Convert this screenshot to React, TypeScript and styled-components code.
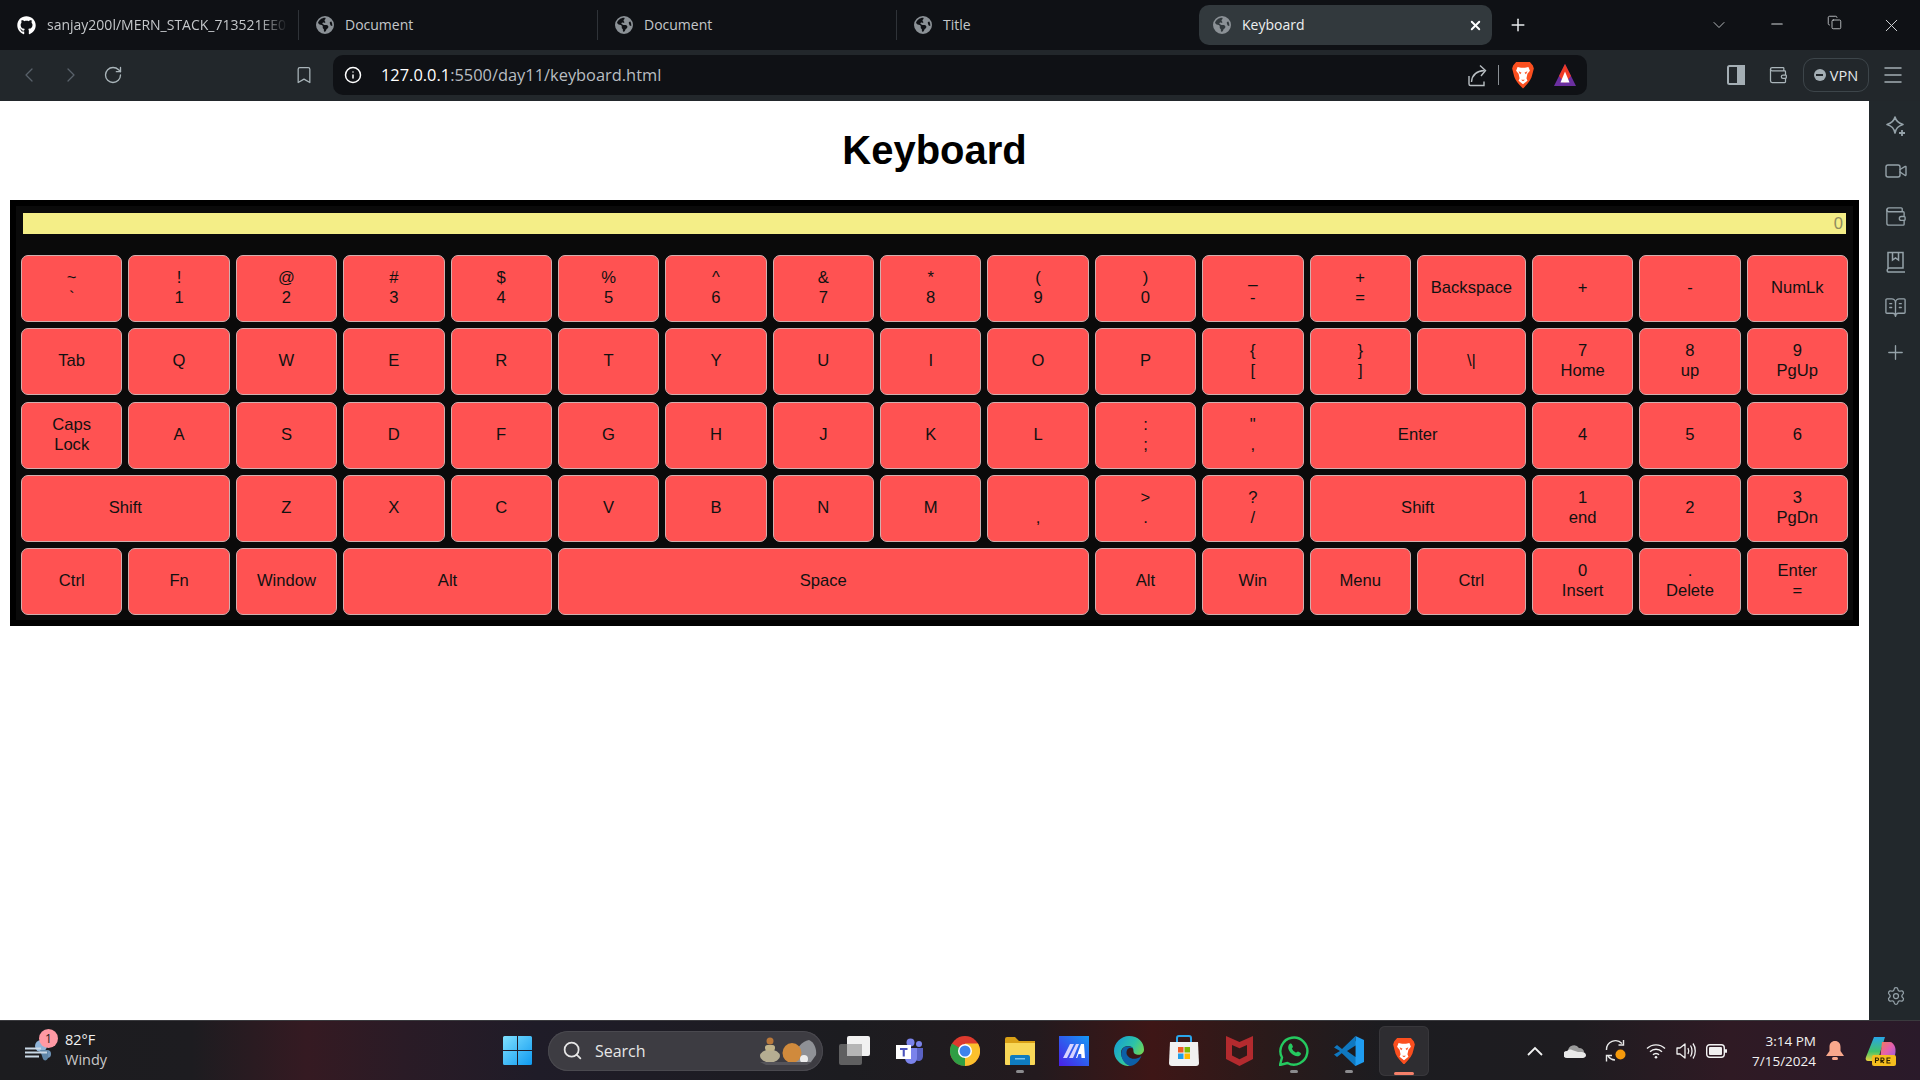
import React from 'react';
import styled, { createGlobalStyle } from 'styled-components';
import { FaGithub } from 'react-icons/fa';
import { FaEarthAmericas } from 'react-icons/fa6';
import {
  BookOpenText,
  Bookmark,
  ChevronDown,
  ChevronLeft,
  ChevronRight,
  Copy,
  Info,
  Menu,
  Minus,
  Plus,
  RotateCw,
  Search,
  Settings,
  Video,
  Wallet,
  X,
} from 'lucide-react';

const GlobalStyle = createGlobalStyle`
  html, body {
    margin: 0;
    padding: 0;
    background: #fff;
  }
  * {
    box-sizing: border-box;
  }
`;

const Screen = styled.div`
  width: 1920px;
  height: 1080px;
  display: flex;
  flex-direction: column;
  overflow: hidden;
`;

/* browser chrome */
const TabStrip = styled.div`
  height: 50px;
  background: #0f1115;
  display: flex;
  align-items: center;
  padding-left: 3px;
  gap: 6px;
  color: #c9ccd0;
  font-family: 'Open Sans', sans-serif;
`;

const Tab = styled.div<{ $active?: boolean; $divider?: boolean }>`
  position: relative;
  width: 293px;
  height: 40px;
  flex: none;
  display: flex;
  align-items: center;
  padding: 0 8px 0 14px;
  gap: 11px;
  border-radius: 10px;
  background: ${(p) => (p.$active ? '#32393d' : 'transparent')};
  &::after {
    content: '';
    display: ${(p) => (p.$divider ? 'block' : 'none')};
    position: absolute;
    right: -3px;
    top: 5px;
    bottom: 5px;
    width: 1px;
    background: #2f3338;
  }
`;

const TabTitle = styled.span<{ $active?: boolean; $fade?: boolean }>`
  flex: 1;
  font-size: 14px;
  padding-bottom: 2px;
  white-space: nowrap;
  color: ${(p) => (p.$active ? '#eef0f1' : '#c4c7ca')};
  ${(p) => (p.$fade ? 'mask-image: linear-gradient(to right, #000 88%, transparent 100%);' : '')}
`;

const TabClose = styled.span`
  display: flex;
  color: #fff;
  margin-right: 1px;
`;

const NewTab = styled.div`
  width: 32px;
  margin-left: 4px;
  display: flex;
  justify-content: center;
  color: #e8eaec;
`;

const WindowControls = styled.div`
  margin-left: auto;
  display: flex;
  color: #d4d7da;
`;

const WindowButton = styled.div`
  width: 57.3px;
  display: flex;
  justify-content: center;
`;

const Toolbar = styled.div`
  height: 51px;
  background: #22272b;
  display: flex;
  align-items: center;
  padding: 0 0 1px 8px;
`;

const NavButton = styled.div<{ $dim?: boolean; $offset?: number }>`
  width: 42px;
  flex: none;
  display: flex;
  justify-content: center;
  margin-left: ${(p) => p.$offset ?? 0}px;
  color: ${(p) => (p.$dim ? '#59616a' : '#aab5ba')};
`;

const AddressBar = styled.div`
  width: 1254px;
  height: 40px;
  margin-left: 8px;
  flex: none;
  border-radius: 10px;
  background: #0f1115;
  display: flex;
  align-items: center;
  padding: 0 10px;
  font-family: 'Open Sans', sans-serif;
`;

const InfoSlot = styled.div`
  width: 20px;
  display: flex;
  justify-content: center;
  color: #fff;
`;

const Url = styled.div`
  margin-left: 18px;
  padding-bottom: 1px;
  font-size: 16.4px;
  color: #b9bdc1;
  b {
    font-weight: 400;
    color: #fff;
  }
`;

const AddressActions = styled.div`
  margin-left: auto;
  display: flex;
  align-items: center;
  gap: 18px;
`;

const ShareGroup = styled.div`
  display: flex;
  align-items: center;
  margin-right: -6px;
`;

const ActionDivider = styled.div`
  width: 1px;
  height: 20px;
  margin-left: 10px;
  background: #8a8f94;
`;

const VpnPill = styled.div`
  width: 66px;
  height: 34px;
  margin-left: 4px;
  flex: none;
  border: 1px solid #3d454a;
  border-radius: 11px;
  display: flex;
  align-items: center;
  justify-content: center;
  gap: 4px;
  color: #e4e7e9;
  font-family: 'Open Sans', sans-serif;
  font-size: 14.5px;
`;

const VpnDot = styled.span`
  width: 12px;
  height: 12px;
  border-radius: 50%;
  background: #a4aeb4;
  display: flex;
  align-items: center;
  justify-content: center;
  &::after {
    content: '';
    width: 7px;
    height: 2px;
    background: #22272b;
  }
`;

const MenuSlot = styled.div`
  width: 48px;
  flex: none;
  display: flex;
  justify-content: center;
  color: #a4aeb4;
`;

const Body = styled.div`
  flex: 1;
  display: flex;
  min-height: 0;
`;

const Page = styled.main`
  flex: 1;
  background: #fff;
  min-width: 0;
`;

const SideBar = styled.aside`
  width: 51px;
  flex: none;
  background: #22282c;
  display: flex;
  flex-direction: column;
  align-items: center;
  padding: 14px 0 14px 2px;
  gap: 22px;
  color: #95a2a9;
`;

const SideSettings = styled.div`
  margin-top: auto;
  display: flex;
`;

/* the keyboard page */
const Title = styled.h1`
  margin: 26px 0 27px;
  font-family: 'Liberation Sans', Arial, sans-serif;
  font-size: 40px;
  line-height: 46px;
  font-weight: 700;
  text-align: center;
  color: #000;
`;

const KeyboardFrame = styled.div`
  margin: 0 10px;
  border: 6px solid #000;
  background: #0a0a0a;
  padding: 7px 5px 5px;
`;

const Display = styled.div`
  height: 21px;
  margin: 0 2px 21px;
  background: #f4ee87;
  color: #8f8d5e;
  font-family: 'Liberation Sans', Arial, sans-serif;
  font-size: 16.6px;
  line-height: 21px;
  text-align: right;
  padding-right: 3px;
`;

const Keys = styled.div`
  display: grid;
  grid-template-columns: repeat(13, 1fr) 109px repeat(3, 1fr);
  grid-auto-rows: 67px;
  column-gap: 6px;
  row-gap: 6.25px;
`;

const Key = styled.button<{ $span?: number }>`
  grid-column: span ${(p) => p.$span ?? 1};
  border: 1.5px solid #d2aeae;
  border-radius: 7px;
  background: #ff5252;
  color: #111;
  padding: 0 0 1px;
  font-family: 'Liberation Sans', Arial, sans-serif;
  font-size: 16.6px;
  line-height: 20px;
  white-space: pre-line;
  text-align: center;
`;

/* taskbar */
const Taskbar = styled.footer`
  height: 60px;
  flex: none;
  display: flex;
  align-items: center;
  padding-right: 12px;
  border-top: 1px solid #3a3a3e;
  color: #f0f0f0;
  font-family: 'Open Sans', sans-serif;
  background: linear-gradient(
    to right,
    #1c1c1f 0%,
    #1d1c20 10%,
    #351a22 16%,
    #2a1b26 21%,
    #1f1c28 28%,
    #1c1c20 44%,
    #231a1e 54%,
    #3e1616 60%,
    #2a1a1a 66%,
    #1c1c20 72%,
    #1e1c20 82%,
    #2f1a24 90%,
    #2a1a2a 100%
  );
`;

const Weather = styled.div`
  width: 490px;
  flex: none;
  display: flex;
  align-items: center;
  padding-left: 25px;
  gap: 12px;
`;

const WeatherIcon = styled.div`
  position: relative;
  width: 28px;
  height: 30px;
`;

const Badge = styled.span`
  position: absolute;
  left: 14px;
  top: -7px;
  width: 19px;
  height: 19px;
  border-radius: 50%;
  background: #ff99a4;
  color: #1a1a1a;
  font-size: 12px;
  line-height: 19px;
  text-align: center;
`;

const WeatherText = styled.div`
  font-size: 14.5px;
  line-height: 20px;
  margin-top: -1px;
  span {
    display: block;
    color: #c9c9c9;
  }
`;

const Slot = styled.div<{ $width?: number; $active?: boolean; $dot?: boolean }>`
  position: relative;
  width: ${(p) => (p.$active ? 50 : p.$width ?? 54.9)}px;
  margin-left: ${(p) => (p.$active ? 2.5 : 0)}px;
  height: 50px;
  flex: none;
  display: flex;
  align-items: center;
  justify-content: center;
  border-radius: 6px;
  ${(p) => (p.$active ? 'background: #2e2d31; box-shadow: inset 0 0 0 1px #38373b;' : '')}
  &::after {
    content: '';
    display: ${(p) => (p.$dot || p.$active ? 'block' : 'none')};
    position: absolute;
    bottom: ${(p) => (p.$active ? 1 : 3)}px;
    left: 50%;
    transform: translateX(-50%);
    width: ${(p) => (p.$active ? 20 : 8)}px;
    height: 3px;
    border-radius: 2px;
    background: ${(p) => (p.$active ? '#f5806a' : '#8b8b8e')};
  }
`;

const SearchPill = styled.div`
  width: 275px;
  height: 40px;
  margin: 0 4.5px 0 3px;
  flex: none;
  border-radius: 20px;
  background: #3d3c42;
  box-shadow: inset 0 0 0 1px #4a494f;
  display: flex;
  align-items: center;
  padding: 0 5px 0 14px;
  color: #e6e6e6;
  font-size: 16px;
  gap: 12px;
`;

const Pebbles = styled.div`
  margin-left: auto;
  display: flex;
`;

const Tray = styled.div`
  margin-left: auto;
  display: flex;
  align-items: center;
`;

const Clock = styled.div`
  width: 80px;
  flex: none;
  text-align: right;
  font-size: 13.5px;
  line-height: 20px;
  white-space: nowrap;
  color: #f2f2f2;
`;

/* drawn icons */
const ShareIcon = () => (
  <svg width="20" height="24" viewBox="0 0 20 24" fill="none" stroke="#b8bec2" strokeWidth="1.400">
    <path d="M1 13v8a1.500 1.500 0 0 0 1.500 1.500H16v-4" />
    <path d="M3.500 19c.5-7 4.500-11 13-11.500" />
    <path d="M12 2.500l5.500 5-4.500 5.500" />
  </svg>
);

const LionIcon = ({ size = 24 }: { size?: number }) => (
  <svg width={size} height={size * 1.15} viewBox="0 0 24 28">
    <path
      d="M5 1h14l3 3.500 1 3-1.500 6c-.8 5-4 9-9.500 14.500C6.500 22.500 3.300 18.500 2.500 13.500L1 7.500l1-3z"
      fill="#fb4f1f"
    />
    <path
      d="M6.500 6l3.500.8h4L17.500 6l1.500 4-2.500 3-1 4.500 1 2.500-4.500 3.500L7.500 20l1-2.500-1-4.500L5 10z"
      fill="#fff"
    />
    <path d="M7.500 10.500l3 1.500-1.500 1.500zM16.500 10.500l-3 1.500 1.500 1.500zM10 19h4l-2 1.600z" fill="#fb4f1f" />
  </svg>
);

const RewardsIcon = () => (
  <svg width="24" height="24" viewBox="0 0 24 24">
    <path d="M12 1L23 23H1z" fill="#6b2fa0" />
    <path d="M12 1L18 13 12 20 6 13z" fill="#f03a24" />
    <path d="M12 8.500L16.500 19.500H7.500z" fill="#fff" />
  </svg>
);

const PanelIcon = () => (
  <svg width="20" height="22" viewBox="0 0 20 22" fill="none" stroke="#a4aeb4" strokeWidth="2">
    <rect x="2" y="2" width="16" height="18" rx="1.500" />
    <rect x="12" y="2" width="6" height="18" fill="#a4aeb4" />
  </svg>
);

const SparkleIcon = () => (
  <svg width="22" height="22" viewBox="0 0 22 22" fill="none" stroke="currentColor" strokeWidth="1.600">
    <path d="M10 2c1 4 3 6 8 7.500-5 1.500-7 3.500-8 8.500-1-5-3-7-8-8.500C7 8 9 6 10 2z" strokeLinejoin="round" />
    <path d="M17 15v6M14 18h6" strokeWidth="1.800" />
  </svg>
);

const BookMarkIcon = () => (
  <svg width="22" height="24" viewBox="0 0 22 24" fill="none" stroke="currentColor" strokeWidth="1.500">
    <path d="M3 19V2.500h15V18H4.500A2.300 2.300 0 0 0 3 22h17" />
    <path d="M7.500 3v7l3-2 3 2V3" />
  </svg>
);

const WindowsLogo = () => (
  <svg width="29" height="29" viewBox="0 0 29 29">
    <defs>
      <linearGradient id="win" x1="0" y1="0" x2="1" y2="1">
        <stop offset="0" stopColor="#7fe0ff" />
        <stop offset="1" stopColor="#0f9af0" />
      </linearGradient>
    </defs>
    <path d="M0 1.500A1.500 1.500 0 0 1 1.500 0H14v14H0zM15 0h12.500A1.500 1.500 0 0 1 29 1.500V14H15zM0 15h14v14H1.500A1.500 1.500 0 0 1 0 27.500zM15 15h14v12.500a1.500 1.500 0 0 1-1.500 1.500H15z" fill="url(#win)" />
  </svg>
);

const WindIcon = () => (
  <svg width="28" height="30" viewBox="0 0 28 30">
    <circle cx="16" cy="10" r="6" fill="#8fb4d8" />
    <circle cx="22" cy="18" r="4" fill="#6e94b8" />
    <path d="M15 14h8v8c-1 3-4 3-5 1z" fill="#5f86a8" />
    <path d="M0 12.500h16M0 16.500h22M0 20.500h14" stroke="#c9d8e6" strokeWidth="2" />
  </svg>
);

const PebblesIcon = () => (
  <svg width="60" height="28" viewBox="0 0 60 28">
    <path d="M36 25c1-14 8-21 15-22 5 2 8 9 7 15l-5 7z" fill="#8f9196" />
    <ellipse cx="12" cy="19" rx="10" ry="6.500" fill="#b5ad92" />
    <rect x="7" y="8" width="10" height="5.500" rx="2.500" fill="#c2b48a" />
    <circle cx="12" cy="4" r="3.500" fill="#b9783a" />
    <ellipse cx="34" cy="16" rx="9.500" ry="10" fill="#d08a3c" />
    <circle cx="46" cy="22" r="4" fill="#ececec" />
    <path d="M2 25h52l-5 3H8z" fill="#55545a" />
  </svg>
);

const TaskViewIcon = () => (
  <svg width="32" height="30" viewBox="0 0 32 30">
    <rect x="0" y="8" width="23" height="21" rx="2" fill="#5f5f60" />
    <rect x="8" y="0" width="23" height="20" rx="2" fill="#f1f1f1" />
    <rect x="8" y="8" width="15" height="12" fill="#b5b5b5" />
  </svg>
);

const TeamsIcon = () => (
  <svg width="28" height="26" viewBox="0 0 28 26">
    <circle cx="23" cy="6" r="3" fill="#7b83eb" />
    <circle cx="14.500" cy="4.500" r="4" fill="#7b83eb" />
    <path d="M18 10h9v8c0 3-2 5-4.500 5-1.500 0-3-1-3.500-2z" fill="#5a62c3" />
    <path d="M9 10h12v10c0 3-2.500 6-6 6s-6-3-6-6z" fill="#7b83eb" />
    <rect x="0" y="7" width="15" height="14" fill="#fff" />
    <path d="M4 10h7.500v2H8.800v6.500H6.700V12H4z" fill="#4b53bc" />
  </svg>
);

const ChromeIcon = () => (
  <svg width="30" height="30" viewBox="0 0 30 30">
    <circle cx="15" cy="15" r="15" fill="#dd3a2e" />
    <path d="M15 15L2 7.500A15 15 0 0 0 15 30l7.500-13z" fill="#2f9e44" />
    <path d="M15 15V7.500h13A15 15 0 0 1 15 30z" fill="#fbc02d" />
    <circle cx="15" cy="15" r="7" fill="#fff" />
    <circle cx="15" cy="15" r="5.500" fill="#3f83ea" />
  </svg>
);

const FolderIcon = () => (
  <svg width="30" height="28" viewBox="0 0 30 28">
    <path d="M0 2a2 2 0 0 1 2-2h8l4 4h16v8H0z" fill="#d9a016" />
    <path d="M0 6h30v21a1 1 0 0 1-1 1H1a1 1 0 0 1-1-1z" fill="#f8d758" />
    <path d="M5 20a2 2 0 0 1 2-2h16a2 2 0 0 1 2 2v8H5z" fill="#0f7cc0" />
    <rect x="10" y="21" width="10" height="1.500" fill="#7cc4ee" />
  </svg>
);

const MaIcon = () => (
  <svg width="30" height="30" viewBox="0 0 30 30">
    <defs>
      <linearGradient id="ma" x1="0" y1="1" x2="1" y2="0">
        <stop offset="0" stopColor="#4a1fe6" />
        <stop offset="1" stopColor="#1499f5" />
      </linearGradient>
    </defs>
    <rect width="30" height="30" fill="url(#ma)" />
    <path d="M4 22l7-14h4L8 22zM10 22l7-14h3l-6 14z" fill="#d8d4ff" />
    <path d="M17 22l5-14h3l1 14h-3.500l-.3-4h-2.600l-1.400 4z" fill="#fff" />
  </svg>
);

const EdgeIcon = () => (
  <svg width="30" height="30" viewBox="0 0 30 30">
    <defs>
      <linearGradient id="edge" x1="0" y1="0" x2="1" y2="0.600">
        <stop offset="0" stopColor="#1498d8" />
        <stop offset="0.600" stopColor="#2cc3a8" />
        <stop offset="1" stopColor="#7ad84a" />
      </linearGradient>
    </defs>
    <path d="M15 0c9 0 15 6 15 13.500 0 4-3.500 6-7.500 5-4-1-2.500-4-3.500-6-1-3-8-4-11 .5C5 18 9 27 17 30 8 31 0 24 0 15 0 7 7 0 15 0z" fill="url(#edge)" />
    <path d="M8.500 13C11 9 18 10 19 12.500c-2-1.500-6-1-6.500 3.500-.5 4.500 5 8 10 6.500 2-.5 4-1.500 5-3-2 6-7 10.500-12 10.500C9 27.500 5 19 8.500 13z" fill="#0c5fa8" />
  </svg>
);

const StoreIcon = () => (
  <svg width="30" height="32" viewBox="0 0 30 32">
    <path d="M8 7V3a2 2 0 0 1 2-2h10a2 2 0 0 1 2 2v4" fill="none" stroke="#2aa5ea" strokeWidth="2" />
    <path d="M1 7h28l1 21a3 3 0 0 1-3 3H3a3 3 0 0 1-3-3z" fill="#f1f1f1" />
    <rect x="9" y="12" width="5.500" height="5.500" fill="#f05a24" />
    <rect x="15.500" y="12" width="5.500" height="5.500" fill="#7fba00" />
    <rect x="9" y="18.500" width="5.500" height="5.500" fill="#1f9ee8" />
    <rect x="15.500" y="18.500" width="5.500" height="5.500" fill="#ffb900" />
  </svg>
);

const McAfeeIcon = () => (
  <svg width="27" height="30" viewBox="0 0 27 30">
    <path d="M0 0l13.500 6L27 0v23L13.500 30 0 23zM6 9v10.500l7.500 3.800 7.500-3.800V9l-7.500 3.200z" fill="#b32a2e" fillRule="evenodd" />
  </svg>
);

const WhatsAppIcon = () => (
  <svg width="30" height="30" viewBox="0 0 30 30">
    <path d="M1 29l2-7.500A13.500 13.500 0 1 1 8.500 27z" fill="none" stroke="#25c95f" strokeWidth="2.400" strokeLinejoin="round" />
    <path d="M10.500 8c1-.8 2-.6 2.400.3l1 2.200c.2.600-.6 1.500-1 2 .8 1.800 2.200 3.200 4.200 4.200.6-.5 1.300-1.400 2-1.200l2.300 1.200c.8.500.6 1.500 0 2.300-1.500 1.800-4 1.500-6.500.2-2.800-1.500-4.700-3.800-5.500-6.300-.5-1.800 0-3.700 1.100-4.900z" fill="#25c95f" />
  </svg>
);

const VsCodeIcon = () => (
  <svg width="30" height="30" viewBox="0 0 30 30">
    <path d="M21.500 0L30 4v22l-8.500 4L8 17l13.500-12z" fill="#1f9cf0" />
    <path d="M21.500 0v30L8 17 3 21l-3-2.500L6 15 0 11.500 3 9l5 4z" fill="#0f78c0" />
    <path d="M21.500 9.500L13 15l8.500 6z" fill="#1c1c20" />
  </svg>
);

const CloudIcon = () => (
  <svg width="22" height="16" viewBox="0 0 22 16">
    <path d="M4 8a6 6 0 0 1 11-3c3 0 5 2 5 4H4z" fill="#9b9b9b" />
    <path d="M3 15a3.500 3.500 0 0 1 0-7c1-1 3-2 5-1l6 2h4c3 0 4 2 4 3.500S20 15 19 15z" fill="#e9e9e9" />
  </svg>
);

const SyncIcon = () => (
  <svg width="22" height="24" viewBox="0 0 22 24">
    <path d="M1.500 11A9 9 0 0 1 17 4.500" fill="none" stroke="#e8e8e8" strokeWidth="1.400" />
    <path d="M18.500 1v5h-5" fill="none" stroke="#e8e8e8" strokeWidth="1.400" />
    <path d="M10 21A9 9 0 0 1 3 17" fill="none" stroke="#e8e8e8" strokeWidth="1.400" />
    <path d="M1.500 22.500v-6h5.500" fill="none" stroke="#e8e8e8" strokeWidth="1.400" />
    <circle cx="15.500" cy="15.500" r="5" fill="#f59a0c" />
  </svg>
);

const WifiIcon = () => (
  <svg width="20" height="16" viewBox="0 0 20 16" fill="none" stroke="#f1f1f1" strokeWidth="1.400">
    <path d="M1 5.500a13 13 0 0 1 18 0" />
    <path d="M4 8.800a8.500 8.500 0 0 1 12 0" />
    <path d="M7 11.800a4 4 0 0 1 6 0" />
    <circle cx="10" cy="14.200" r="1.300" fill="#f1f1f1" stroke="none" />
  </svg>
);

const VolumeIcon = () => (
  <svg width="20" height="18" viewBox="0 0 20 18" fill="none" stroke="#f1f1f1" strokeWidth="1.300">
    <path d="M1 6h3l5-4v14l-5-4H1z" strokeLinejoin="round" />
    <path d="M12 6c1 2 1 4 0 6M14.500 3.500c2 3 2 8 0 11M17 1.500c3 4 3 11 0 15" />
  </svg>
);

const BatteryIcon = () => (
  <svg width="21" height="14" viewBox="0 0 21 14">
    <rect x="0.700" y="0.700" width="17.600" height="12.600" rx="3" fill="none" stroke="#f1f1f1" strokeWidth="1.400" />
    <rect x="3" y="3" width="13" height="8" rx="1" fill="#f1f1f1" />
    <rect x="19" y="5" width="2" height="4" rx="1" fill="#f1f1f1" />
  </svg>
);

const BellIcon = () => (
  <svg width="18" height="20" viewBox="0 0 18 20">
    <path d="M9 0c3.500 0 5.500 2.500 5.500 6v4l3.500 5H0l3.500-5V6C3.500 2.500 5.500 0 9 0z" fill="#f9a88c" />
    <rect x="6" y="16" width="6" height="3" rx="1.500" fill="#f9a88c" />
  </svg>
);

const CopilotIcon = () => (
  <svg width="32" height="30" viewBox="0 0 32 30">
    <defs>
      <linearGradient id="cpA" x1="0" y1="0" x2="0" y2="1">
        <stop offset="0" stopColor="#28a5e8" />
        <stop offset="0.600" stopColor="#42c26a" />
        <stop offset="1" stopColor="#e8d23c" />
      </linearGradient>
      <linearGradient id="cpB" x1="0" y1="0" x2="1" y2="1">
        <stop offset="0" stopColor="#f37c55" />
        <stop offset="0.500" stopColor="#e45fb0" />
        <stop offset="1" stopColor="#8a5ce6" />
      </linearGradient>
    </defs>
    <path d="M9 1h11L14 20c-1 3-3 5-6 5H3c-2 0-3-2-2-4z" fill="url(#cpA)" />
    <path d="M17 6h8c2 0 4 2 5 5s1 9-3 13H15z" fill="url(#cpB)" />
    <rect x="7" y="19" width="24" height="11" rx="2" fill="#f5bd1e" />
    <path d="M10.500 27v-5h2c1.400 0 1.400 2.500 0 2.500h-2M16 27v-5h2c1.400 0 1.400 2.500 0 2.500h-2l3 2.500M25.500 22h-3.500v5h3.500M22 24.500h3" fill="none" stroke="#2a2000" strokeWidth="1.100" />
  </svg>
);

const tabTitles = ['sanjay200l/MERN_STACK_713521EE0', 'Document', 'Document', 'Title', 'Keyboard'];

type KeyDef = string | [string, number];

const keyRows: KeyDef[][] = [
  ['~\n`', '!\n1', '@\n2', '#\n3', '$\n4', '%\n5', '^\n6', '&\n7', '*\n8', '(\n9', ')\n0', '_\n-', '+\n=', 'Backspace', '+', '-', 'NumLk'],
  ['Tab', 'Q', 'W', 'E', 'R', 'T', 'Y', 'U', 'I', 'O', 'P', '{\n[', '}\n]', '\\|', '7\nHome', '8\nup', '9\nPgUp'],
  ['Caps\nLock', 'A', 'S', 'D', 'F', 'G', 'H', 'J', 'K', 'L', ':\n;', '"\n,', ['Enter', 2], '4', '5', '6'],
  [['Shift', 2], 'Z', 'X', 'C', 'V', 'B', 'N', 'M', '\n,', '>\n.', '?\n/', ['Shift', 2], '1\nend', '2', '3\nPgDn'],
  ['Ctrl', 'Fn', 'Window', ['Alt', 2], ['Space', 5], 'Alt', 'Win', 'Menu', 'Ctrl', '0\nInsert', '.\nDelete', 'Enter\n='],
];

const App = () => {
  return (
    <Screen>
      <GlobalStyle />
      <TabStrip>
        {tabTitles.map((title, index) => (
          <Tab key={index} $active={index === 4} $divider={index < 3}>
            {index === 0 ? <FaGithub size={19} color="#fff" /> : <FaEarthAmericas size={18} color="#8b9196" />}
            <TabTitle $active={index === 4} $fade={index === 0}>{title}</TabTitle>
            {index === 4 && (
              <TabClose>
                <X size={15} strokeWidth={3} />
              </TabClose>
            )}
          </Tab>
        ))}
        <NewTab>
          <Plus size={20} strokeWidth={1.8} />
        </NewTab>
        <WindowControls>
          <WindowButton><ChevronDown size={20} strokeWidth={1} /></WindowButton>
          <WindowButton><Minus size={18} strokeWidth={1.4} /></WindowButton>
          <WindowButton><Copy size={15} strokeWidth={1.3} /></WindowButton>
          <WindowButton><X size={21} strokeWidth={1.1} /></WindowButton>
        </WindowControls>
      </TabStrip>

      <Toolbar>
        <NavButton $dim><ChevronLeft size={24} strokeWidth={1.3} /></NavButton>
        <NavButton $dim><ChevronRight size={24} strokeWidth={1.3} /></NavButton>
        <NavButton><RotateCw size={20} strokeWidth={1.6} /></NavButton>
        <NavButton $offset={149}><Bookmark size={20} strokeWidth={1.5} /></NavButton>
        <AddressBar>
          <InfoSlot><Info size={18} strokeWidth={2} /></InfoSlot>
          <Url><b>127.0.0.1</b>:5500/day11/keyboard.html</Url>
          <AddressActions>
            <ShareGroup>
              <ShareIcon />
              <ActionDivider />
            </ShareGroup>
            <LionIcon />
            <RewardsIcon />
          </AddressActions>
        </AddressBar>
        <NavButton $offset={128}><PanelIcon /></NavButton>
        <NavButton><Wallet size={20} strokeWidth={1.5} /></NavButton>
        <VpnPill><VpnDot />VPN</VpnPill>
        <MenuSlot><Menu size={24} strokeWidth={1.5} /></MenuSlot>
      </Toolbar>

      <Body>
        <Page>
          <Title>Keyboard</Title>
          <KeyboardFrame>
            <Display>0</Display>
            <Keys>
              {keyRows.flat().map((def, index) => {
                const [label, span] = typeof def === 'string' ? [def, 1] : def;
                return (
                  <Key key={index} $span={span}>{label}</Key>
                );
              })}
            </Keys>
          </KeyboardFrame>
        </Page>
        <SideBar>
          <SparkleIcon />
          <Video size={24} strokeWidth={1.4} />
          <Wallet size={23} strokeWidth={1.4} />
          <BookMarkIcon />
          <BookOpenText size={23} strokeWidth={1.4} />
          <Plus size={23} strokeWidth={1.4} />
          <SideSettings><Settings size={20} strokeWidth={1.5} /></SideSettings>
        </SideBar>
      </Body>

      <Taskbar>
        <Weather>
          <WeatherIcon>
            <WindIcon />
            <Badge>1</Badge>
          </WeatherIcon>
          <WeatherText>
            82°F
            <span>Windy</span>
          </WeatherText>
        </Weather>
        <Slot><WindowsLogo /></Slot>
        <SearchPill>
          <Search size={21} strokeWidth={2} />
          Search
          <Pebbles><PebblesIcon /></Pebbles>
        </SearchPill>
        <Slot><TaskViewIcon /></Slot>
        <Slot><TeamsIcon /></Slot>
        <Slot><ChromeIcon /></Slot>
        <Slot $dot><FolderIcon /></Slot>
        <Slot><MaIcon /></Slot>
        <Slot><EdgeIcon /></Slot>
        <Slot><StoreIcon /></Slot>
        <Slot><McAfeeIcon /></Slot>
        <Slot $dot><WhatsAppIcon /></Slot>
        <Slot $dot><VsCodeIcon /></Slot>
        <Slot $active><LionIcon size={24} /></Slot>
        <Tray>
          <Slot $width={40}>
            <svg width="16" height="10" viewBox="0 0 16 10" fill="none" stroke="#f2f2f2" strokeWidth="1.800"><path d="M1 9l7-7 7 7" /></svg>
          </Slot>
          <Slot $width={40}><CloudIcon /></Slot>
          <Slot $width={41}><SyncIcon /></Slot>
          <Slot $width={40}><WifiIcon /></Slot>
          <Slot $width={20}><VolumeIcon /></Slot>
          <Slot $width={40}><BatteryIcon /></Slot>
          <Clock>3:14 PM<br />7/15/2024</Clock>
          <Slot $width={38}><BellIcon /></Slot>
          <Slot $width={54}><CopilotIcon /></Slot>
        </Tray>
      </Taskbar>
    </Screen>
  );
};

export default App;
